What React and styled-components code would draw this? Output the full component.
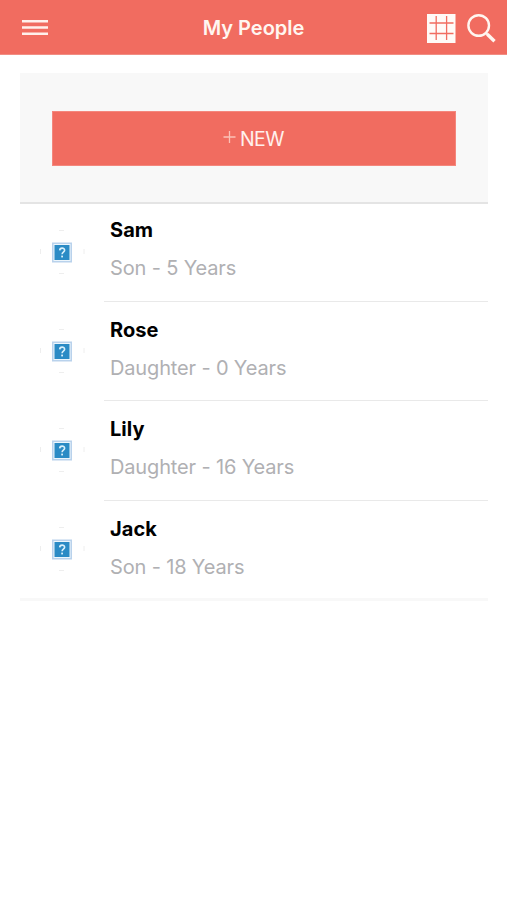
import React from "react";
import styled, { createGlobalStyle } from "styled-components";

const GlobalStyle = createGlobalStyle`
  * {
    box-sizing: border-box;
  }

  body {
    margin: 0;
    background-color: #fff;
    font-family: Inter, "Liberation Sans", sans-serif;
  }
`

const Container = styled.main`
  width: 100%;
  min-height: 900px;
  background-color: #fff;
`

const Header = styled.header`
  height: 55px;
  padding: 0 22px;
  display: grid;
  grid-template-columns: 1fr auto 1fr;
  align-items: center;
  background-color: #f16c60;
  border-bottom: 1px solid #f18d83;
`

const Title = styled.h1`
  margin: 2px 0 0;
  color: #fff6f0;
  font-size: 20px;
  line-height: 24px;
  font-weight: 600;
  letter-spacing: 0;
`

const IconButton = styled.button`
  border: 0;
  padding: 0;
  background: none;
  display: flex;
`

const Actions = styled.div`
  margin: 2px -11px 0 0;
  display: flex;
  justify-content: flex-end;
  align-items: center;
  gap: 11px;
`

const Content = styled.section`
  padding: 18px 19px 0 20px;
`

const NewPanel = styled.div`
  height: 131px;
  padding: 38px 32px 0;
  background-color: #f8f8f8;
  border-bottom: 2px solid #e4e4e4;
`

const NewButton = styled.button`
  width: 100%;
  height: 55px;
  border: 1px solid #f4877d;
  padding: 0 1px 0 0;
  display: flex;
  justify-content: center;
  align-items: center;
  gap: 4px;
  background-color: #f16c60;
  color: #fff0ec;
  font-family: inherit;
  font-size: 19.5px;
  letter-spacing: -0.5px;
`

const PeopleList = styled.ul`
  margin: 0;
  padding: 0;
  list-style: none;
  border-bottom: 3px solid #f8f8f8;
`

const Person = styled.li`
  height: 99.3px;
  padding-left: 19px;
  display: flex;

  &:first-child {
    height: 98px;
  }

  &:last-child {
    height: 97px;
  }
`

const Avatar = styled.svg`
  flex: none;
  margin-top: ${(props) => (props.$first ? "24.5px" : "25.6px")};
`

const Details = styled.div`
  flex-grow: 1;
  margin-left: 19px;
  padding: ${(props) => (props.$first ? "13px" : "15px")} 0 0 6px;
  border-bottom: ${(props) => (props.$last ? "0" : "1px solid #e9e9e9")};
`

const Name = styled.div`
  color: #000;
  font-size: 20px;
  line-height: 26px;
  font-weight: 650;
  letter-spacing: 0.05px;
`

const Relation = styled.div`
  margin-top: 12px;
  color: #b0b0b3;
  font-size: 20px;
  line-height: 26px;
  letter-spacing: -0.15px;
`

const people = [
  { name: "Sam", relation: "Son", age: 5 },
  { name: "Rose", relation: "Daughter", age: 0 },
  { name: "Lily", relation: "Daughter", age: 16 },
  { name: "Jack", relation: "Son", age: 18 },
];

const MissingPhoto = ({ first }) => (
  <Avatar $first={first} width="46" height="46" viewBox="0 0 46 46">
    <path d="M20 1.5h5M20 44.5h5M1.5 20v5M45 20v5" stroke="#eeeeee" fill="none" />
    <rect x="13" y="13.5" width="20" height="20" fill="#b9d2ec" />
    <rect x="15" y="15.5" width="16" height="16" fill="#2b8bc5" stroke="#edf6fc" />
    <path d="M20.7 21.4c.1-3 4.9-3 4.9-.1 0 1.9-2.5 1.9-2.5 4" stroke="#d9f0fb" strokeWidth="1.6" fill="none" />
    <rect x="22.2" y="26.6" width="1.8" height="1.8" fill="#d9f0fb" />
  </Avatar>
)

const App = () => {
  return (
    <Container>
      <GlobalStyle />
      <Header>
        <IconButton aria-label="Menu">
          <svg width="26" height="17" viewBox="0 0 26 17">
            <path d="M0 2.2h26M0 8.5h26M0 14.8h26" stroke="#fff0eb" strokeWidth="2.4" />
          </svg>
        </IconButton>
        <Title>My People</Title>
        <Actions>
          <IconButton aria-label="Calendar">
            <svg width="29" height="29" viewBox="0 0 29 29">
              <rect width="28.5" height="29" fill="#fffaf7" />
              <path d="M9.2 2v24M19.6 2v24M2.5 9h24M2.5 19.5h24" stroke="#f16c60" strokeWidth="1.3" />
            </svg>
          </IconButton>
          <IconButton aria-label="Search">
            <svg width="29" height="29" viewBox="0 0 29 29">
              <circle cx="11.7" cy="11.5" r="10.3" stroke="#fff6f0" strokeWidth="2.4" fill="none" />
              <path d="M19 19l2 2" stroke="#fff6f0" strokeWidth="2.2" />
              <path d="M20.3 20.3l7.2 7" stroke="#fff6f0" strokeWidth="3.4" />
            </svg>
          </IconButton>
        </Actions>
      </Header>
      <Content>
        <NewPanel>
          <NewButton>
            <svg width="13" height="16" viewBox="0 0 13 16">
              <path d="M.5 6h12M6.5 0v12" stroke="#fbc1b6" strokeWidth="1.3" />
            </svg>
            NEW
          </NewButton>
        </NewPanel>
        <PeopleList>
          {people.map((item, i) => (
            <Person key={item.name}>
              <MissingPhoto first={i === 0} />
              <Details $first={i === 0} $last={i === people.length - 1}>
                <Name>{item.name}</Name>
                <Relation>{`${item.relation} - ${item.age} Years`}</Relation>
              </Details>
            </Person>
          ))}
        </PeopleList>
      </Content>
    </Container>
  );
};

export default App;
